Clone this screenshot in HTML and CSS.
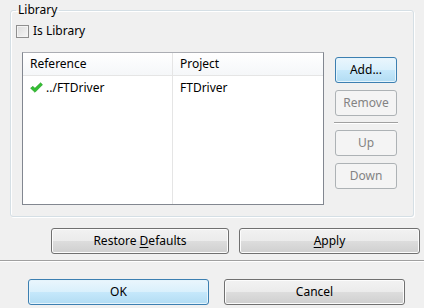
FILE: index.html
```html
<!DOCTYPE html>
<html lang="en">
<head>
    <meta charset="UTF-8">
    <meta name="viewport" content="width=device-width, initial-scale=1.0">
    <title>Library</title>
    <link rel="stylesheet" href="styles.css">
</head>
<body>
    <div class="page">
        <fieldset class="group">
            <legend>Library</legend>
            <label class="check-row">
                <span class="checkbox"></span>
                <span>Is Library</span>
            </label>
            <div class="group-body">
                <div class="list">
                    <div class="col col-ref">
                        <div class="head">Reference</div>
                        <div class="cell">
                            <svg class="tick" width="13" height="11" viewBox="0 0 13 11">
                                <path d="M0.6 6.2 L2.9 4.3 L4.9 6.3 L10.6 0.8 L12.5 2.7 L5 10.3 Z" fill="#34bf34" stroke="#1f9a1f" stroke-width="0.6" stroke-linejoin="round"/>
                            </svg>
                            <span>../FTDriver</span>
                        </div>
                    </div>
                    <div class="col col-proj">
                        <div class="head">Project</div>
                        <div class="cell">FTDriver</div>
                    </div>
                </div>
                <div class="side-buttons">
                    <div class="button default">Add...</div>
                    <div class="button disabled">Remove</div>
                    <div class="side-sep"></div>
                    <div class="button disabled">Up</div>
                    <div class="button disabled">Down</div>
                </div>
            </div>
        </fieldset>

        <div class="row restore-row">
            <div class="button restore">Restore <u>D</u>efaults</div>
            <div class="button apply"><u>A</u>pply</div>
        </div>

        <div class="separator"></div>

        <div class="row dialog-row">
            <div class="button default wide">OK</div>
            <div class="button wide">Cancel</div>
        </div>
    </div>
</body>
</html>
```

FILE: styles.css
```css
body {
    margin: 0;
    background-color: #f0f0f0;
    font-family: "Noto Sans", "Liberation Sans", sans-serif;
    font-size: 12px;
    color: #000;
    width: 424px;
    height: 308px;
    overflow: hidden;
}
.page {
    padding-top: 2px;
}
.group {
    margin: 0 10px 0 10px;
    padding: 0 16px 11px 5px;
    border: 1px solid #d5dfe5;
    border-radius: 3px;
    box-shadow: 1px 1px 0 #fff, inset 1px 1px 0 #fff;
}
.group legend {
    padding: 0 2px;
    line-height: 16px;
}
.check-row {
    display: flex;
    align-items: center;
    gap: 4px;
    height: 16px;
    margin-top: 5px;
    line-height: 16px;
}
.checkbox {
    width: 11px;
    height: 11px;
    border: 1px solid #8f8f8f;
    background: linear-gradient(135deg, #dcdcdc, #f6f6f6);
    box-shadow: inset 0 0 0 1px #f4f4f4;
}
.group-body {
    display: flex;
    margin-top: 13px;
    margin-left: 6px;
}
.list {
    display: flex;
    width: 300px;
    height: 151px;
    border: 1px solid #828790;
    border-top-color: #abadb3;
    background-color: #fff;
}
.col-ref {
    width: 149px;
    border-right: 1px solid #e5e5e5;
}
.col-proj {
    flex: 1;
}
.head {
    height: 22px;
    line-height: 22px;
    padding-left: 7px;
    border-bottom: 1px solid #e5e5e5;
    background: linear-gradient(#ffffff, #f5f7f9);
}
.cell {
    display: flex;
    align-items: center;
    height: 22px;
    padding-left: 7px;
}
.tick {
    margin-right: 3px;
}
.side-buttons {
    display: flex;
    flex-direction: column;
    width: 62px;
    margin-left: 11px;
    padding-top: 5px;
    gap: 7px;
}
.side-sep {
    height: 0;
    border-top: 1px solid #a0a0a0;
    border-bottom: 1px solid #fff;
    margin: -1px -1px -1px -1px;
}
.button {
    box-sizing: border-box;
    height: 26px;
    line-height: 24px;
    text-align: center;
    border: 1px solid #707070;
    border-radius: 3px;
    background: linear-gradient(#f2f2f2 0%, #ebebeb 50%, #dddddd 50%, #cfcfcf 100%);
    box-shadow: inset 0 0 0 1px #fcfcfc;
    cursor: default;
    user-select: none;
}
.button.default {
    border-color: #3c7fb1;
    background: linear-gradient(#eaf6fd 0%, #d9f0fc 50%, #c6e8fb 50%, #b2dcf3 100%);
    box-shadow: inset 0 0 0 1px #e5f4fc;
}
.button.disabled {
    border-color: #adb2b5;
    background: #f4f4f4;
    box-shadow: none;
    color: #838383;
}
.button u {
    text-underline-offset: 2px;
}
.row {
    display: flex;
}
.restore-row {
    margin-top: 11px;
    padding-left: 51px;
    gap: 10px;
}
.restore {
    width: 178px;
}
.apply {
    width: 181px;
}
.separator {
    margin-top: 6px;
    border-top: 1px solid #a0a0a0;
    border-bottom: 1px solid #fff;
}
.dialog-row {
    margin-top: 17px;
    padding-left: 28px;
    gap: 15px;
}
.wide {
    width: 181px;
}
```
